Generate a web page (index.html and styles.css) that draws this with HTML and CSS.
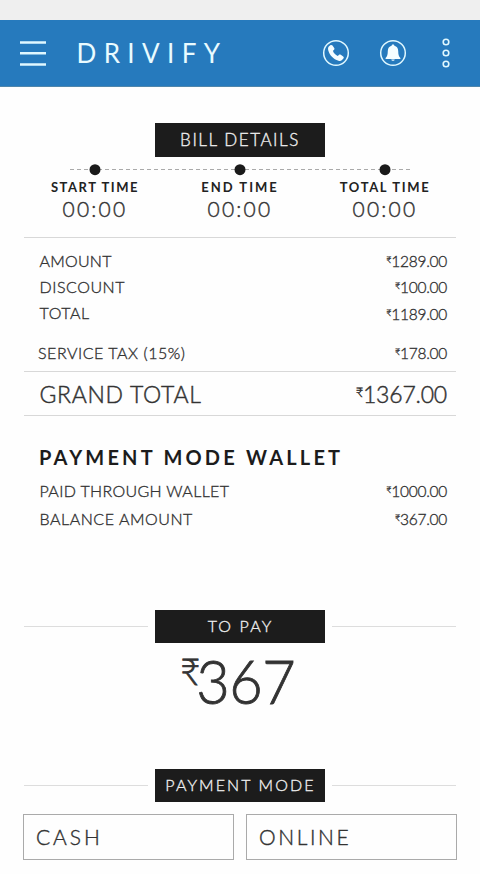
FILE: index.html
```html
<!DOCTYPE html>
<html lang="en">
<head>
  <meta charset="UTF-8">
  <title>Drivify - Bill Details</title>
  <link rel="stylesheet" href="styles.css">
</head>
<body>
  <div class="status-bar"></div>
  <header>
    <svg class="menu" width="26" height="26" viewBox="0 0 26 26">
      <path d="M0 2.500h26M0 13.200h26M0 24.500h26"/>
    </svg>
    <h1>DRIVIFY</h1>
    <svg class="icon phone" width="28" height="28" viewBox="0 0 28 28">
      <circle cx="14" cy="14" r="12.300"/>
      <path d="M6.800 7.600l1.500-1.300c.8-.6 1.600-.5 2.200.2l1.700 2.400c.5.8.3 1.500-.3 2l-1 .8c.7 2.300 2.500 4.200 4.900 5.200l1-1c.6-.5 1.300-.5 2-.1l2.400 1.700c.7.6.8 1.300.2 2l-1.400 1.500c-.9.900-2.100 1.100-3.500.7-5.200-1.700-8.800-5.400-10.200-10.300-.4-1.500-.3-2.800.5-3.800z"/>
    </svg>
    <svg class="icon bell" width="28" height="28" viewBox="0 0 28 28">
      <circle cx="14" cy="14" r="12.300"/>
      <path d="M14 5.500c.9 0 1.300.5 1.400 1.300 2.500.6 3.700 2.400 3.800 5.100.1 3.800.5 5.400 2.200 7v1H6.600v-1c1.700-1.600 2.100-3.200 2.200-7 .1-2.700 1.300-4.500 3.800-5.100.1-.8.500-1.300 1.400-1.300zM12.300 20.400h3.400c-.2 1-.8 1.400-1.700 1.400s-1.500-.4-1.700-1.400z"/>
    </svg>
    <svg class="more" width="10" height="32" viewBox="0 0 10 32">
      <circle cx="5" cy="5" r="2.800"/>
      <circle cx="5" cy="16" r="2.800"/>
      <circle cx="5" cy="27" r="2.800"/>
    </svg>
  </header>

  <main>
    <h2 class="tag bill">BILL DETAILS</h2>
    <svg class="timeline" width="340" height="12" viewBox="0 0 340 12">
      <path d="M0 5.500h340"/>
      <circle cx="25" cy="5.700" r="5.500"/>
      <circle cx="170" cy="5.700" r="5.500"/>
      <circle cx="315" cy="5.700" r="5.500"/>
    </svg>
    <ul class="times">
      <li><b class="start">START TIME</b><span>00:00</span></li>
      <li><b class="end">END TIME</b><span>00:00</span></li>
      <li><b>TOTAL TIME</b><span>00:00</span></li>
    </ul>

    <section class="amounts">
      <div class="row"><span class="tight">AMOUNT</span><span class="price"><i>₹</i>1289.00</span></div>
      <div class="row"><span>DISCOUNT</span><span class="price"><i>₹</i>100.00</span></div>
      <div class="row total"><span>TOTAL</span><span class="price"><i>₹</i>1189.00</span></div>
      <div class="row tax"><span>SERVICE TAX (15%)</span><span class="price"><i>₹</i>178.00</span></div>
    </section>
    <div class="row grand"><span>GRAND TOTAL</span><span class="price"><i>₹</i>1367.00</span></div>

    <section class="wallet">
      <h3>PAYMENT MODE WALLET</h3>
      <div class="row paid"><span>PAID THROUGH WALLET</span><span class="price"><i>₹</i>1000.00</span></div>
      <div class="row"><span>BALANCE AMOUNT</span><span class="price"><i>₹</i>367.00</span></div>
    </section>

    <div class="divider"><h2 class="tag">TO PAY</h2></div>
    <p class="to-pay"><i>₹</i>367</p>

    <div class="divider"><h2 class="tag">PAYMENT MODE</h2></div>
    <div class="modes">
      <button type="button" class="cash">CASH</button>
      <button type="button">ONLINE</button>
    </div>
  </main>
</body>
</html>
```
FILE: styles.css
```css
* {
  box-sizing: border-box;
  margin: 0;
  padding: 0;
}
body {
  background: #fefefe;
  color: #333;
  font: 16px Lato, sans-serif;
}
svg {
  display: block;
  fill: none;
}
i {
  font-style: normal;
}
.status-bar {
  background: #efefef;
  height: 20px;
}
header {
  align-items: center;
  background: #267abd;
  border-bottom: 1px solid #4f86ab;
  color: #e9fbff;
  display: flex;
  height: 67px;
  padding: 0 29px 0 20px;
}
header svg {
  stroke: #e0f8ff;
}
.menu {
  stroke-width: 2.5;
}
h1 {
  font-size: 26px;
  font-weight: 400;
  letter-spacing: 7.4px;
  margin: 0 auto 0 30.5px;
}
.icon {
  stroke-width: 1.5;
}
.icon path {
  fill: #f4fdff;
  stroke: none;
}
.phone {
  margin-right: 29px;
}
.bell {
  margin-right: 34px;
}
.more {
  stroke-width: 1.6;
}

main {
  padding: 36px 24px 0;
}
.tag {
  background: #1c1c1c;
  color: #eee;
  font-size: 16px;
  font-weight: 300;
  height: 33px;
  letter-spacing: 2.1px;
  line-height: 32px;
  text-align: center;
  text-indent: 1px;
  width: 170px;
  -webkit-text-stroke: .35px;
}
.bill {
  font-size: 17px;
  height: 34px;
  letter-spacing: 1.55px;
  line-height: 34px;
  margin: 0 auto;
  text-indent: 0;
}
.timeline {
  margin: 7px auto 0;
}
.timeline path {
  stroke: #aaa;
  stroke-dasharray: 4 3;
}
.timeline circle {
  fill: #1a1a1a;
}
.times {
  display: grid;
  grid-template-columns: repeat(3, 145px);
  justify-content: center;
  list-style: none;
  padding-top: 3px;
  text-align: center;
}
.times b {
  color: #222;
  display: block;
  font-size: 13px;
  letter-spacing: 1.65px;
  line-height: 16px;
}
.times .start {
  letter-spacing: 1.55px;
}
.times .end {
  letter-spacing: 2px;
}
.times span {
  display: block;
  font-size: 21px;
  font-weight: 300;
  letter-spacing: 2.2px;
  line-height: 27px;
  -webkit-text-stroke: .4px;
}

.amounts {
  border-bottom: 1px solid #d8d8d8;
  border-top: 1px solid #d8d8d8;
  height: 135px;
  margin-top: 15px;
  padding-top: 9px;
}
.row {
  align-items: center;
  display: flex;
  font-weight: 300;
  height: 26px;
  justify-content: space-between;
  letter-spacing: .55px;
  padding: 0 9px 0 15.5px;
  -webkit-text-stroke: .35px;
}
.tight {
  letter-spacing: .25px;
}
.price {
  font-size: 15.5px;
  letter-spacing: -.25px;
  padding-top: 2px;
}
.price i {
  font-size: 9px;
  vertical-align: 4px;
}
.total {
  height: 27px;
}
.tax {
  height: 26px;
  margin-top: 13px;
  padding-left: 14px;
}
.grand {
  border-bottom: 1px solid #d8d8d8;
  font-size: 23px;
  height: 44px;
  letter-spacing: .7px;
  -webkit-text-stroke: .45px;
}
.grand .price {
  font-size: 23px;
  letter-spacing: -.2px;
  padding-top: 0;
}
.grand i {
  font-size: 13px;
  vertical-align: 6px;
}

.wallet {
  height: 194px;
  padding-top: 26px;
}
.wallet h3 {
  color: #1c1c1c;
  font-size: 20px;
  letter-spacing: 3.2px;
  line-height: 30px;
  margin: 0 -20px 4px 15px;
  white-space: nowrap;
}
.wallet .row {
  height: 28px;
}
.wallet .paid {
  letter-spacing: .35px;
}

.divider {
  align-items: center;
  display: flex;
  gap: 7px;
}
.divider::before, .divider::after {
  background: #ddd;
  content: "";
  flex: 1;
  height: 1px;
}
.to-pay {
  color: #333;
  font-size: 62px;
  font-weight: 300;
  height: 126px;
  letter-spacing: -.5px;
  line-height: 75px;
  padding-right: 5px;
  text-align: center;
  transform: scaleX(.93);
  -webkit-text-stroke: .9px;
}
.to-pay i {
  font-size: 37px;
  letter-spacing: -4px;
  line-height: 0;
  vertical-align: 19px;
}

.modes {
  display: grid;
  gap: 12px;
  grid-template-columns: 1fr 1fr;
  margin: 12px -1px 0;
}
.modes button {
  background: none;
  border: 1px solid #aaa;
  color: #333;
  font: 300 21px Lato, sans-serif;
  height: 46px;
  letter-spacing: 2.6px;
  padding: 0 0 2px 12px;
  text-align: left;
  -webkit-text-stroke: .4px;
}
.modes .cash {
  letter-spacing: 2.9px;
}
```
